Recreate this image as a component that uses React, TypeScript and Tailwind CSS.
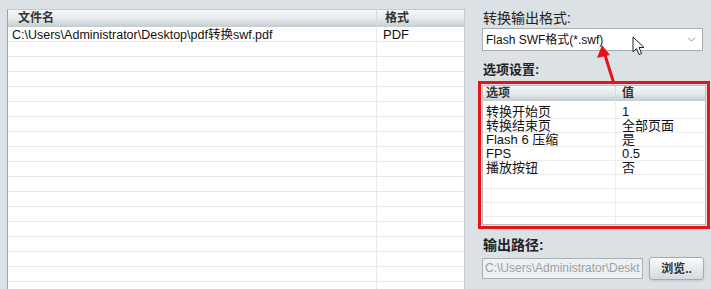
import { ChevronDown } from "lucide-react";

const font = { fontFamily: '"Liberation Sans", "Noto Sans CJK SC", sans-serif' };

const files = [{ name: "C:\\Users\\Administrator\\Desktop\\pdf转换swf.pdf", format: "PDF" }];

const options = [
    { key: "转换开始页", value: "1" },
    { key: "转换结束页", value: "全部页面" },
    { key: "Flash 6 压缩", value: "是" },
    { key: "FPS", value: "0.5" },
    { key: "播放按钮", value: "否" },
    { key: "", value: "" },
    { key: "", value: "" },
    { key: "", value: "" },
    { key: "", value: "" },
];

const App = () => {
    const rows = Array.from({ length: 18 }, (_, i) => files[i] ?? { name: "", format: "" });

    return (
        <div
            className="relative flex w-[711px] h-[289px] overflow-hidden bg-[#dbe1e5] text-[#111]"
            style={font}
        >
            {/* file list */}
            <div className="ml-[7px] mt-[9px] w-[458px] flex flex-col border-l border-t border-r border-l-[#9ea3a7] border-t-[#c3c9cd] border-r-[#c3c9cd] bg-white">
                <div className="flex h-[17px] shrink-0 bg-gradient-to-b from-[#f5f7f8] via-[#e6eaec] to-[#c5cdd1] text-[12px] font-bold text-[#333] leading-[17px]">
                    <div className="w-[369px] pl-[10px] border-r border-[#d4d9dc]">文件名</div>
                    <div className="pl-[8px]">格式</div>
                </div>
                {rows.map((row, index) => (
                    <div key={index} className="flex h-[15px] shrink-0 border-b border-[#e9e9e9] text-[12.5px] leading-[16px]">
                        <div className="w-[369px] pl-[4px] border-r border-[#e9e9e9] whitespace-nowrap">{row.name}</div>
                        <div className="pl-[6px] text-[13px]">{row.format}</div>
                    </div>
                ))}
            </div>

            {/* settings */}
            <div className="ml-[13px] w-[232px] flex flex-col">
                <div className="ml-[5px] mt-[10px] h-[17px] text-[14px] leading-[17px] text-[#222]">转换输出格式:</div>
                <div className="ml-[4px] mt-[1px] w-[221px] h-[23px] flex items-center justify-between border border-[#a6adb2] bg-white pl-[3px] pr-[4px] text-[12px]">
                    <span>Flash SWF格式(*.swf)</span>
                    <ChevronDown size={13} strokeWidth={1.5} className="text-[#777]" />
                </div>
                <div className="ml-[5px] mt-[11px] h-[16px] text-[13px] font-bold leading-[16px] text-[#222]">选项设置:</div>
                <div className="mt-[3px] w-[232px] h-[148px] border-[3px] border-[#e4141a] p-[1px]">
                    <div className="h-full flex flex-col overflow-hidden bg-white border border-[#b9c0c4]">
                        <div className="flex h-[15px] shrink-0 bg-gradient-to-b from-[#f5f7f8] via-[#e6eaec] to-[#c5cdd1] text-[12px] font-bold text-[#333] leading-[15px]">
                            <div className="w-[133px] pl-[3px] border-r border-[#d4d9dc]">选项</div>
                            <div className="pl-[6px]">值</div>
                        </div>
                        <div className="h-[4px] shrink-0 border-r border-[#ececec] w-[133px]" />
                        {options.map((row, index) => (
                            <div key={index} className="flex h-[14px] shrink-0 border-b border-[#ececec] text-[13px] leading-[14px]">
                                <div className="w-[133px] pl-[3px] border-r border-[#ececec] whitespace-nowrap">{row.key}</div>
                                <div className="pl-[6px]">{row.value}</div>
                            </div>
                        ))}
                    </div>
                </div>
                <div className="ml-[5px] mt-[8px] h-[17px] text-[14px] font-bold leading-[17px] text-[#222]">输出路径:</div>
                <div className="ml-[4px] mt-[3px] flex items-center gap-[6px]">
                    <div className="w-[161px] h-[21px] overflow-hidden whitespace-nowrap border border-[#a9b0b5] bg-[#eef1f2] pl-[2px] text-[12px] leading-[19px] text-[#9a9fa3]">
                        C:\Users\Administrator\Deskt
                    </div>
                    <div className="w-[55px] h-[23px] flex items-center justify-center rounded-[3px] border border-[#a3abb0] bg-gradient-to-b from-[#fbfcfc] to-[#d3d9dc] text-[12px] font-bold text-[#333] shadow-sm">
                        浏览..
                    </div>
                </div>
            </div>

            {/* red arrow */}
            <svg className="absolute left-0 top-0 pointer-events-none" width="711" height="289">
                <line x1="614" y1="84" x2="605" y2="55" stroke="#e4141a" strokeWidth="3" />
                <polygon points="602,45 597,58 610,55" fill="#e4141a" />
            </svg>

            {/* mouse cursor */}
            <svg className="absolute left-[632px] top-[36px] pointer-events-none" width="14" height="21" viewBox="0 0 14 21">
                <path d="M1 1 L1 16 L4.5 12.5 L7 18.5 L9.5 17.5 L7 11.5 L12 11.5 Z" fill="#fff" stroke="#222" strokeWidth="1" strokeLinejoin="round" />
            </svg>
        </div>
    );
};

export default App;
